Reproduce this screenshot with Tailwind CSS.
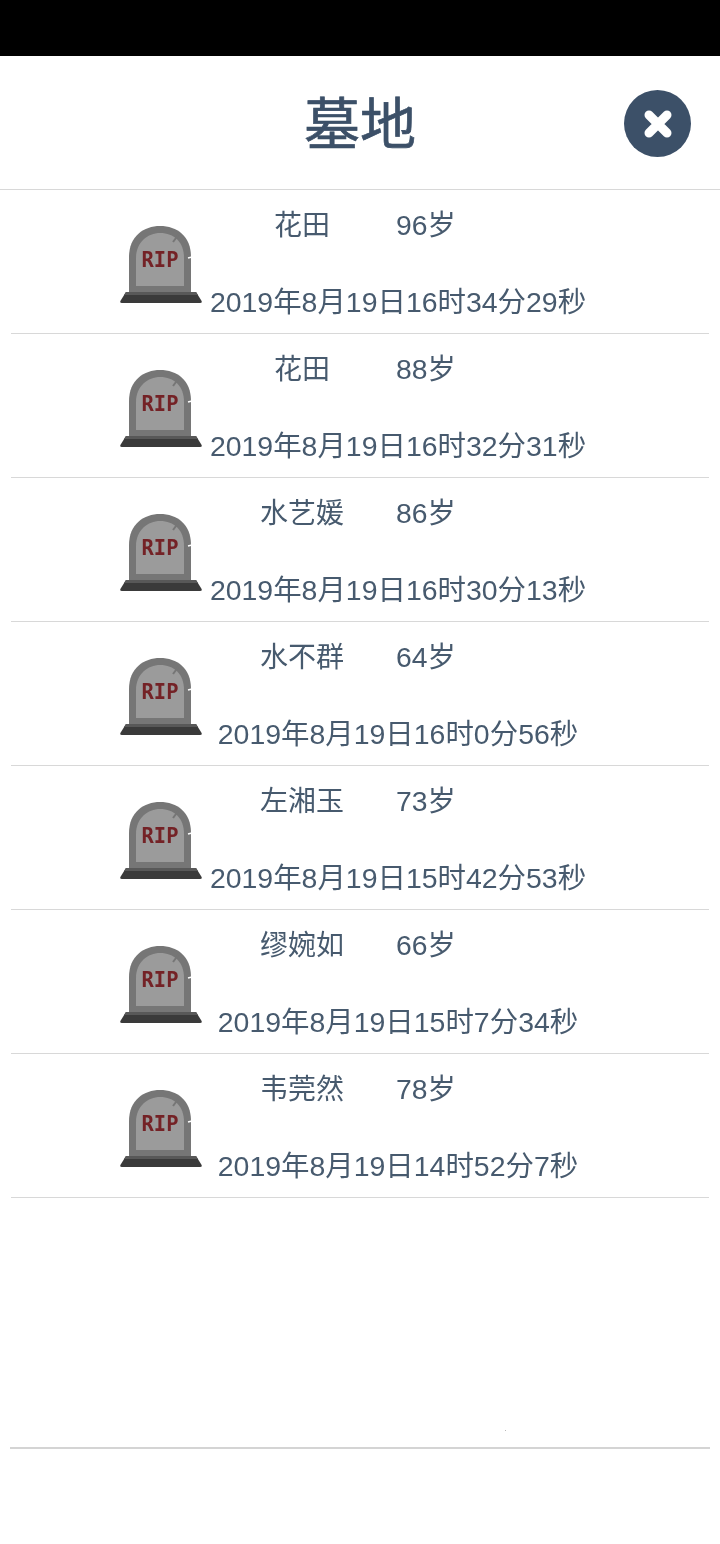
<!DOCTYPE html>
<html lang="zh">
  <head>
    <meta charset="UTF-8" />
    <meta name="viewport" content="width=device-width, initial-scale=1.0" />
    <script src="https://cdn.jsdelivr.net/npm/@tailwindcss/browser@4"></script>
    <title>墓地</title>
  </head>
  <body class="bg-white font-['Liberation_Sans','Noto_Sans_CJK_SC',sans-serif] text-[#475a6e]">
    <!-- tombstone drawing, reused by every row -->
    <svg class="absolute size-0">
      <defs>
        <symbol id="tomb" viewBox="0 0 82 78">
          <path d="M9 68V32C9 11 24 1 40 1C57 1 71 11 71 32V68Z" fill="#767676" />
          <path d="M16 61V33C16 17 28 8 40 8C54 8 64 17 64 33V61Z" fill="#9b9b9b" />
          <path d="M59 9L53 17" fill="none" stroke="#767676" stroke-width="2" />
          <path d="M72 32L68 33" fill="none" stroke="#ffffff" stroke-width="1.5" />
          <path d="M6 67H76L81 75Q83 78 80 78H2Q-1 78 1 75Z" fill="#3a3a3a" />
          <path d="M6 67H76L78 70H4Z" fill="#585858" />
          <text x="40" y="42" text-anchor="middle" font-family="'DejaVu Sans Mono', monospace" font-weight="700" font-size="22" textLength="37" lengthAdjust="spacingAndGlyphs" fill="#742226">RIP</text>
        </symbol>
      </defs>
    </svg>

    <div class="h-14 bg-black"></div>

    <!-- header -->
    <header class="relative flex h-[134px] items-center justify-center border-b border-[#d8d8d8]">
      <h1 class="pt-[5px] text-[56px] leading-none text-[#3c5068] blur-[0.3px] [-webkit-text-stroke:0.7px_#3c5068]">墓地</h1>
      <button class="absolute right-[29px] top-[34px] flex size-[67px] items-center justify-center rounded-full bg-[#3c5068] blur-[0.6px]">
        <svg width="32" height="32" viewBox="0 0 32 32">
          <path d="M7 7L25 25M25 7L7 25" stroke="#ffffff" stroke-width="9" stroke-linecap="round" />
        </svg>
      </button>
    </header>

    <!-- graves -->
    <main class="px-[11px]">
      <div class="flex h-36 border-b border-[#d8d8d8] pl-[109px]">
        <svg class="mt-[35px] h-[78px] w-[82px] shrink-0 blur-[0.6px]"><use href="#tomb" /></svg>
        <div class="flex w-[392px] flex-col justify-between pt-[17px] pb-[13px] text-[28.45px] leading-[36px] blur-[0.25px]">
          <div class="flex items-baseline pl-[28px]"><span class="w-[144px] text-center text-[28px]">花田</span><span class="ml-[22px] text-[28.3px]">96岁</span></div>
          <div class="text-center">2019年8月19日16时34分29秒</div>
        </div>
      </div>
      <div class="flex h-36 border-b border-[#d8d8d8] pl-[109px]">
        <svg class="mt-[35px] h-[78px] w-[82px] shrink-0 blur-[0.6px]"><use href="#tomb" /></svg>
        <div class="flex w-[392px] flex-col justify-between pt-[17px] pb-[13px] text-[28.45px] leading-[36px] blur-[0.25px]">
          <div class="flex items-baseline pl-[28px]"><span class="w-[144px] text-center text-[28px]">花田</span><span class="ml-[22px] text-[28.3px]">88岁</span></div>
          <div class="text-center">2019年8月19日16时32分31秒</div>
        </div>
      </div>
      <div class="flex h-36 border-b border-[#d8d8d8] pl-[109px]">
        <svg class="mt-[35px] h-[78px] w-[82px] shrink-0 blur-[0.6px]"><use href="#tomb" /></svg>
        <div class="flex w-[392px] flex-col justify-between pt-[17px] pb-[13px] text-[28.45px] leading-[36px] blur-[0.25px]">
          <div class="flex items-baseline pl-[28px]"><span class="w-[144px] text-center text-[28px]">水艺媛</span><span class="ml-[22px] text-[28.3px]">86岁</span></div>
          <div class="text-center">2019年8月19日16时30分13秒</div>
        </div>
      </div>
      <div class="flex h-36 border-b border-[#d8d8d8] pl-[109px]">
        <svg class="mt-[35px] h-[78px] w-[82px] shrink-0 blur-[0.6px]"><use href="#tomb" /></svg>
        <div class="flex w-[392px] flex-col justify-between pt-[17px] pb-[13px] text-[28.45px] leading-[36px] blur-[0.25px]">
          <div class="flex items-baseline pl-[28px]"><span class="w-[144px] text-center text-[28px]">水不群</span><span class="ml-[22px] text-[28.3px]">64岁</span></div>
          <div class="text-center">2019年8月19日16时0分56秒</div>
        </div>
      </div>
      <div class="flex h-36 border-b border-[#d8d8d8] pl-[109px]">
        <svg class="mt-[35px] h-[78px] w-[82px] shrink-0 blur-[0.6px]"><use href="#tomb" /></svg>
        <div class="flex w-[392px] flex-col justify-between pt-[17px] pb-[13px] text-[28.45px] leading-[36px] blur-[0.25px]">
          <div class="flex items-baseline pl-[28px]"><span class="w-[144px] text-center text-[28px]">左湘玉</span><span class="ml-[22px] text-[28.3px]">73岁</span></div>
          <div class="text-center">2019年8月19日15时42分53秒</div>
        </div>
      </div>
      <div class="flex h-36 border-b border-[#d8d8d8] pl-[109px]">
        <svg class="mt-[35px] h-[78px] w-[82px] shrink-0 blur-[0.6px]"><use href="#tomb" /></svg>
        <div class="flex w-[392px] flex-col justify-between pt-[17px] pb-[13px] text-[28.45px] leading-[36px] blur-[0.25px]">
          <div class="flex items-baseline pl-[28px]"><span class="w-[144px] text-center text-[28px]">缪婉如</span><span class="ml-[22px] text-[28.3px]">66岁</span></div>
          <div class="text-center">2019年8月19日15时7分34秒</div>
        </div>
      </div>
      <div class="flex h-36 border-b border-[#d8d8d8] pl-[109px]">
        <svg class="mt-[35px] h-[78px] w-[82px] shrink-0 blur-[0.6px]"><use href="#tomb" /></svg>
        <div class="flex w-[392px] flex-col justify-between pt-[17px] pb-[13px] text-[28.45px] leading-[36px] blur-[0.25px]">
          <div class="flex items-baseline pl-[28px]"><span class="w-[144px] text-center text-[28px]">韦莞然</span><span class="ml-[22px] text-[28.3px]">78岁</span></div>
          <div class="text-center">2019年8月19日14时52分7秒</div>
        </div>
      </div>
    </main>

    <!-- footer rule -->
    <div class="relative mx-[10px] mt-[249px] h-[2px] bg-[#d4d4d4]">
      <span class="absolute left-[495px] top-[-17px] size-px bg-[#b8b8b8]"></span>
    </div>
  </body>
</html>
